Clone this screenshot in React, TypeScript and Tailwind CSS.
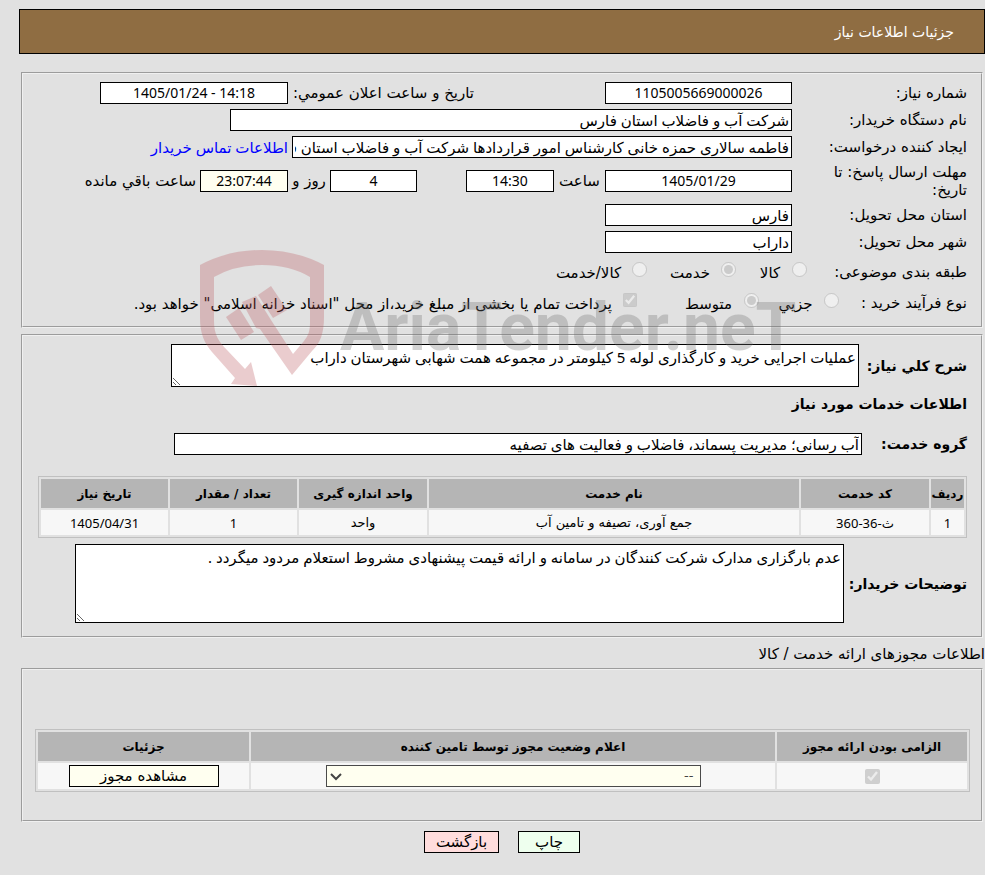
import type { ReactNode } from "react";
import clsx from "clsx";

const panel = "ms-[2px] me-[2px] border-2 border-[#f0f0f0] [border-style:groove]";
const control = "border border-black px-[2px] font-['Noto_Sans','DejaVu_Sans',sans-serif]";
const numeric = "bg-white text-center text-sm";

const services = [
  { row: "1", code: "ث-36-360", name: "جمع آوری، تصیفه و تامین آب", unit: "واحد", count: "1", date: "1405/04/31" },
];

interface FieldProps {
  id: string;
  value: string;
  label?: string;
  className?: string;
}

const Field = ({ id, value, label, className }: FieldProps) => (
  <input
    id={id}
    type="text"
    readOnly
    defaultValue={value}
    aria-label={label}
    className={clsx(control, "h-[22px] shrink-0", className)}
  />
);

interface RowProps {
  label: string;
  htmlFor?: string;
  className?: string;
  children: ReactNode;
}

const Row = ({ label, htmlFor, className, children }: RowProps) => (
  <div className={clsx("flex items-center", className)}>
    <label htmlFor={htmlFor} className="w-[175px] shrink-0 pe-8 leading-[18px]">
      {label}
    </label>
    {children}
  </div>
);

const Th = ({ children, className }: { children: ReactNode; className?: string }) => (
  <th className={clsx("h-[29px] bg-[#b5b5b5] p-0 text-center text-xs font-bold whitespace-nowrap", className)}>{children}</th>
);

const Td = ({ children, className }: { children: ReactNode; className?: string }) => (
  <td className={clsx("bg-[#f7f7f7] p-0 text-center text-[13px]", className)}>{children}</td>
);

interface OptionProps {
  name: string;
  label: string;
  checked?: boolean;
  className?: string;
}

const Option = ({ name, label, checked, className }: OptionProps) => (
  <label className={clsx("flex shrink-0 items-start", className)}>
    <input type="radio" name={name} disabled defaultChecked={checked} className="size-[15px]" />
    <span className="grow pt-[2px] text-center whitespace-nowrap">{label}</span>
  </label>
);

const Watermark = () => (
  <div dir="ltr" className="pointer-events-none absolute top-[249px] left-[200px] flex items-start opacity-30">
    <svg width="126" height="138" viewBox="0 0 126 138" fill="#bc5a60">
      <path d="M0 16Q28 1 62 1t62 15v52c0 17-4 26-12 34L92 126 60 80l-4-1-14-26 14-6 15 24 22 34 11-13c4-5 6-10 6-18V28Q90 16 62 16T14 28v44c0 14 5 21 13 29l18 19 6-7 6 24-26-2 4-6L12 103C4 94 0 84 0 69z" />
      <path d="M26 68 39 59 54 83 41 91z" />
      <path d="M58 46 71 37 87 61 73 69z" />
    </svg>
    <span className="mt-10 ps-[14px] font-[Roboto] text-[66px] leading-[78px] font-bold text-[#707070]">AriaTender.neT</span>
  </div>
);

export default function App() {
  return (
    <div
      dir="rtl"
      lang="fa"
      className="relative min-h-screen bg-[#e1e1e1] ps-0 pe-[19px] pt-[9px] font-['DejaVu_Sans',sans-serif] text-[15px] leading-[18px] text-black"
    >
      <header className="flex h-[45px] items-center border border-black bg-[#8f6d42] px-[30px] text-sm text-white">
        <h1>جزئیات اطلاعات نیاز</h1>
      </header>

      <section className={clsx(panel, "mt-[18px] h-[256px] ps-[14px] pt-[5px]")}>
        <Row label="شماره نیاز:" htmlFor="number" className="h-[27px]">
          <div className="flex w-[318px] shrink-0">
            <Field id="number" value="1105005669000026" className={clsx(numeric, "w-[187px]")} />
          </div>
          <label htmlFor="announced" className="w-[186px] shrink-0 whitespace-nowrap">
            تاریخ و ساعت اعلان عمومي:
          </label>
          <Field id="announced" value="1405/01/24 - 14:18" className={clsx(numeric, "w-[188px] [direction:ltr]")} />
        </Row>
        <Row label="نام دستگاه خریدار:" htmlFor="buyer" className="h-[27px]">
          <Field id="buyer" value="شرکت آب و فاضلاب استان فارس" className="w-[562px] bg-white" />
        </Row>
        <Row label="ایجاد کننده درخواست:" htmlFor="creator" className="h-[27px]">
          <Field
            id="creator"
            value="فاطمه سالاری حمزه خانی کارشناس امور قراردادها شرکت آب و فاضلاب استان فارس"
            className="w-[500px] bg-white"
          />
          <a href="#contact" className="ms-1 font-['Noto_Sans','DejaVu_Sans'] whitespace-nowrap text-[#0000ff]">
            اطلاعات تماس خریدار
          </a>
        </Row>
        <Row label="مهلت ارسال پاسخ: تا تاریخ:" htmlFor="deadline" className="h-[41px]">
          <div className="flex w-[375px] shrink-0 items-center">
            <Field id="deadline" value="1405/01/29" className={clsx(numeric, "w-[187px]")} />
            <label htmlFor="deadline-time" className="w-[51px] shrink-0 text-center">
              ساعت
            </label>
            <Field id="deadline-time" value="14:30" className={clsx(numeric, "w-[88px]")} />
          </div>
          <Field id="days" label="روز" value="4" className={clsx(numeric, "w-[87px]")} />
          <label htmlFor="days" className="w-[42px] shrink-0 text-center whitespace-nowrap">
            روز و
          </label>
          <Field id="time-left" label="ساعت" value="23:07:44" className="w-[88px] bg-[#fffff0] text-center text-sm" />
          <label htmlFor="time-left" className="ms-1 whitespace-nowrap">
            ساعت باقي مانده
          </label>
        </Row>
        <Row label="استان محل تحویل:" htmlFor="province" className="h-[27px]">
          <Field id="province" value="فارس" className="w-[187px] bg-white" />
        </Row>
        <Row label="شهر محل تحویل:" htmlFor="city" className="h-[27px]">
          <Field id="city" value="داراب" className="w-[187px] bg-white" />
        </Row>
        <div className="flex h-[34px] items-center">
          <span className="w-[160px] shrink-0">طبقه بندی موضوعی:</span>
          <Option name="category" label="کالا" className="w-[71px] pe-3" />
          <Option name="category" label="خدمت" checked className="w-[89px] pe-3" />
          <Option name="category" label="کالا/خدمت" className="w-[102px]" />
        </div>
        <div className="flex h-7 items-center">
          <span className="w-[128px] shrink-0">نوع فرآیند خرید :</span>
          <Option name="process" label="جزيي" className="w-[80px] pe-2" />
          <Option name="process" label="متوسط" checked className="w-[122px] pe-9" />
          <label className="flex shrink-0 items-start">
            <input type="checkbox" disabled defaultChecked className="size-[14px]" />
            <span className="ps-[11px] pt-[2px] whitespace-nowrap">
              پرداخت تمام یا بخشی از مبلغ خرید،از محل "اسناد خزانه اسلامی" خواهد بود.
            </span>
          </label>
        </div>
      </section>

      <section className={clsx(panel, "mt-[6px] h-[304px] ps-[14px] pt-2")}>
        <div className="flex items-center">
          <label htmlFor="summary" className="w-[108px] shrink-0 text-sm font-bold">
            شرح کلي نیاز:
          </label>
          <textarea
            id="summary"
            readOnly
            className={clsx(control, "h-[43px] w-[688px] bg-white pt-[3px]")}
            defaultValue="عملیات اجرایی خرید و کارگذاری لوله 5 کیلومتر در مجموعه همت شهابی شهرستان داراب"
          />
        </div>
        <h2 className="mt-[7px] text-sm font-bold">اطلاعات خدمات مورد نیاز</h2>
        <div className="mt-[19px] flex items-center">
          <label htmlFor="group" className="w-[105px] shrink-0 text-sm font-bold">
            گروه خدمت:
          </label>
          <Field id="group" value="آب رسانی؛ مدیریت پسماند، فاضلاب و فعالیت های تصفیه" className="w-[688px] bg-white" />
        </div>
        <div className="me-[15px] mt-[21px] border border-[#c0c0c0]">
          <table className="w-full table-fixed border-separate border-spacing-[2px]">
            <thead>
              <tr>
                <Th className="w-[33px]">ردیف</Th>
                <Th className="w-[128px]">کد خدمت</Th>
                <Th>نام خدمت</Th>
                <Th className="w-[128px]">واحد اندازه گیری</Th>
                <Th className="w-[127px]">تعداد / مقدار</Th>
                <Th className="w-[127px]">تاریخ نیاز</Th>
              </tr>
            </thead>
            <tbody>
              {services.map((s) => (
                <tr key={s.code} className="h-[25px]">
                  <Td className="font-['Noto_Sans']">{s.row}</Td>
                  <Td className="font-['Noto_Sans','DejaVu_Sans']">{s.code}</Td>
                  <Td>{s.name}</Td>
                  <Td>{s.unit}</Td>
                  <Td className="font-['Noto_Sans']">{s.count}</Td>
                  <Td className="font-['Noto_Sans']">{s.date}</Td>
                </tr>
              ))}
            </tbody>
          </table>
        </div>
        <div className="mt-[6px] flex items-center">
          <label htmlFor="notes" className="w-[123px] shrink-0 text-sm font-bold whitespace-nowrap">
            توضیحات خریدار:
          </label>
          <textarea
            id="notes"
            readOnly
            className={clsx(control, "h-[79px] w-[769px] bg-white pt-[3px]")}
            defaultValue="عدم بارگزاری مدارک شرکت کنندگان در سامانه و ارائه قیمت پیشنهادی مشروط استعلام مردود میگردد ."
          />
        </div>
      </section>

      <h2 className="mt-[7px] mb-[5px]">اطلاعات مجوزهای ارائه خدمت / کالا</h2>

      <section className={clsx(panel, "h-[154px] ps-[11px] pe-3 pt-[59px]")}>
        <div className="border border-[#c0c0c0]">
          <table className="w-full table-fixed border-separate border-spacing-[2px]">
            <thead>
              <tr>
                <Th className="w-[190px]">الزامی بودن ارائه مجوز</Th>
                <Th>اعلام وضعیت مجوز توسط تامین کننده</Th>
                <Th className="w-[211px]">جزئیات</Th>
              </tr>
            </thead>
            <tbody>
              <tr className="h-[26px]">
                <Td>
                  <input
                    type="checkbox"
                    aria-label="الزامی بودن ارائه مجوز"
                    disabled
                    defaultChecked
                    className="mx-auto block size-[15px]"
                  />
                </Td>
                <Td>
                  <div className="relative mx-auto w-[375px]">
                    <select
                      aria-label="اعلام وضعیت مجوز"
                      className="block h-[22px] w-full appearance-none border border-[#4a4a4a] bg-[#fffff0] px-[6px] text-[#444]"
                    >
                      <option>--</option>
                    </select>
                    <svg
                      className="pointer-events-none absolute top-[8px] left-1"
                      width="12"
                      height="8"
                      viewBox="0 0 12 8"
                      fill="none"
                      stroke="#444"
                      strokeWidth="2"
                    >
                      <path d="M1 1l5 5 5-5" />
                    </svg>
                  </div>
                </Td>
                <Td>
                  <button type="button" className="mx-auto block h-[22px] w-[150px] border border-black bg-[#fffff0] text-[15px]">
                    مشاهده مجوز
                  </button>
                </Td>
              </tr>
            </tbody>
          </table>
        </div>
      </section>

      <div className="mt-[9px] flex justify-center gap-[19px]">
        <button type="button" className="h-[22px] w-[62px] border border-black bg-[#eeffee]">
          چاپ
        </button>
        <button type="button" className="h-[22px] w-[75px] border border-black bg-[#ffdddd]">
          بازگشت
        </button>
      </div>

      <Watermark />
    </div>
  );
}
